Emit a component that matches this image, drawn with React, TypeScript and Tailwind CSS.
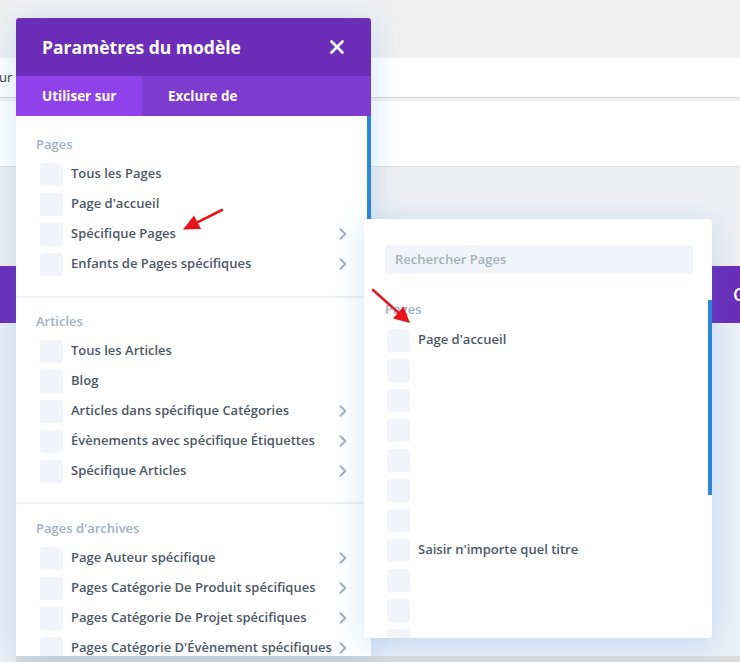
import React from "react";

type Item = { label: string; chevron?: boolean };

const pages: Item[] = [
  { label: "Tous les Pages" },
  { label: "Page d'accueil" },
  { label: "Spécifique Pages", chevron: true },
  { label: "Enfants de Pages spécifiques", chevron: true },
];
const articles: Item[] = [
  { label: "Tous les Articles" },
  { label: "Blog" },
  { label: "Articles dans spécifique Catégories", chevron: true },
  { label: "Évènements avec spécifique Étiquettes", chevron: true },
  { label: "Spécifique Articles", chevron: true },
];
const archives: Item[] = [
  { label: "Page Auteur spécifique", chevron: true },
  { label: "Pages Catégorie De Produit spécifiques", chevron: true },
  { label: "Pages Catégorie De Projet spécifiques", chevron: true },
  { label: "Pages Catégorie D'Évènement spécifiques", chevron: true },
];
const rightRows = ["Page d'accueil", "", "", "", "", "", "", "Saisir n'importe quel titre", "", "", ""];

function Chevron() {
  return (
    <svg width="8" height="12" viewBox="0 0 8 12" className="shrink-0">
      <path d="M1.5 1.2 L6.3 6 L1.5 10.8" fill="none" stroke="#a3b0c2" strokeWidth="2" strokeLinecap="round" strokeLinejoin="round" />
    </svg>
  );
}

function Row({ item }: { item: Item }) {
  return (
    <div className="flex h-[30px] items-center pl-[4px]">
      <div className="h-[23px] w-[23px] shrink-0 rounded-[3px] bg-[#f1f5f9]" />
      <div className="ml-[8px] flex-1 whitespace-nowrap text-[13px] font-semibold text-[#4e5864]">{item.label}</div>
      {item.chevron ? <Chevron /> : null}
    </div>
  );
}

function Section({ title, items, pad, last }: { title: string; items: Item[]; pad: string; last?: boolean }) {
  return (
    <div className={`${pad} ${last ? "" : "border-b-2 border-[#edf0f4]"} px-[20px]`}>
      <div className="h-[20px] text-[13px] font-semibold leading-[20px] text-[#a3b0c2]">{title}</div>
      <div className="mt-[5px] flex flex-col">
        {items.map((it) => (
          <Row key={it.label} item={it} />
        ))}
      </div>
    </div>
  );
}

export default function App() {
  return (
    <div className="relative h-[662px] w-[740px] overflow-hidden bg-[#f0f0f1] font-['Open_Sans',sans-serif]">
      {/* page behind the modal */}
      <div className="flex h-full flex-col">
        <div className="h-[58px] shrink-0" />
        <div className="flex h-[40px] shrink-0 items-center border-b border-[#dcdcde] bg-white text-[13px] text-[#32373c]">
          <span className="-ml-[1px] whitespace-nowrap">ur créer</span>
        </div>
        <div className="h-[3px] shrink-0" />
        <div className="h-[66px] shrink-0 border-b border-[#dcdcde] bg-white" />
        <div className="h-[99px] shrink-0 bg-[#eeeff2]" />
        <div className="flex h-[57px] shrink-0 items-center justify-end bg-[#6c2eb9]">
          <span className="w-[7px] overflow-hidden text-[18px] font-semibold text-white">C</span>
        </div>
        <div className="flex-1 bg-[#eaeff7]" />
        <div className="ml-[16px] h-[6px] shrink-0 bg-[#dcdcdc]" />
      </div>

      {/* main modal */}
      <div className="absolute left-[16px] top-[18px] flex h-[638px] w-[355px] flex-col overflow-hidden rounded-t-[3px] bg-white shadow-[0_5px_30px_rgba(43,135,218,0.22)]">
        <div className="flex h-[58px] shrink-0 items-center justify-between bg-[#6c2eb9] pl-[26px] pr-[27px]">
          <div className="whitespace-nowrap text-[17.5px] font-bold text-white">Paramètres du modèle</div>
          <svg width="14" height="14" viewBox="0 0 14 14">
            <path d="M1.5 1.5 L12.5 12.5 M12.5 1.5 L1.5 12.5" stroke="#fff" strokeWidth="2.6" strokeLinecap="round" />
          </svg>
        </div>
        <div className="flex h-[40px] shrink-0 bg-[#7e3bd0] text-[13.5px] font-bold text-white">
          <div className="flex w-[126px] items-center bg-[#8f42ec] pl-[26px] whitespace-nowrap">Utiliser sur</div>
          <div className="flex items-center px-[26px] whitespace-nowrap">Exclure de</div>
        </div>
        <div className="flex min-h-0 flex-1">
          <div className="min-w-0 flex-1">
            <Section title="Pages" items={pages} pad="pt-[18px] pb-[17px]" />
            <Section title="Articles" items={articles} pad="pt-[13px] pb-[16px]" />
            <Section title="Pages d'archives" items={archives} pad="pt-[14px]" last />
          </div>
          <div className="w-[4px] shrink-0">
            <div className="h-[110px] bg-[#2b87da]" />
          </div>
        </div>
      </div>

      {/* sub panel */}
      <div className="absolute left-[364px] top-[219px] flex h-[419px] w-[348px] overflow-hidden rounded-[3px] bg-white shadow-[0_5px_30px_rgba(43,135,218,0.22)]">
        <div className="min-w-0 flex-1 pl-[21px] pr-[15px] pt-[26px]">
          <div className="flex h-[29px] items-center rounded-[3px] bg-[#f1f5f9] px-[10px] pt-[1px] text-[13px] font-semibold text-[#a3b0c2]">
            Rechercher Pages
          </div>
          <div className="mt-[25px] h-[20px] text-[13px] font-semibold leading-[20px] text-[#a3b0c2]">Pages</div>
          <div className="mt-[6px] flex flex-col">
            {rightRows.map((label, i) => (
              <div key={i} className="flex h-[30px] items-center pl-[2px]">
                <div className="h-[23px] w-[23px] shrink-0 rounded-[3px] bg-[#f1f5f9]" />
                <div className="ml-[8px] whitespace-nowrap text-[13px] font-semibold text-[#4e5864]">{label}</div>
              </div>
            ))}
          </div>
        </div>
        <div className="w-[4px] shrink-0 pt-[81px]">
          <div className="h-[195px] bg-[#2b87da]" />
        </div>
      </div>

      {/* annotation arrows */}
      <svg className="pointer-events-none absolute left-0 top-0" width="740" height="662" viewBox="0 0 740 662">
        <line x1="222" y1="210" x2="197.3" y2="222.4" stroke="#e8141c" strokeWidth="2.6" strokeLinecap="round" />
        <polygon points="183,229.5 201,229 194,215.5" fill="#e8141c" />
        <line x1="373" y1="290" x2="398.1" y2="312.4" stroke="#e8141c" strokeWidth="2.6" strokeLinecap="round" />
        <polygon points="410,323 393,318.5 403.5,306.5" fill="#e8141c" />
      </svg>
    </div>
  );
}
